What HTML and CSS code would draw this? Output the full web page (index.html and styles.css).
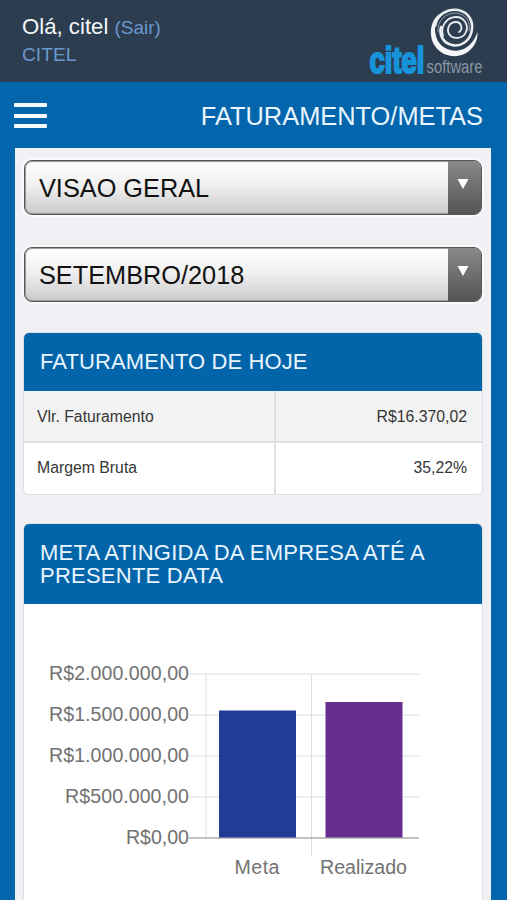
FILE: index.html
```html
<!DOCTYPE html>
<html lang="pt-BR">
<head>
<meta charset="utf-8">
<title>Faturamento/Metas</title>
<link rel="stylesheet" href="styles.css">
</head>
<body>
<header class="topbar">
  <div class="user">
    <div class="greeting">Olá, citel <a class="logout">(Sair)</a></div>
    <div class="company">CITEL</div>
  </div>
  <svg class="logo" width="120" height="77" viewBox="0 0 120 77">
    <text class="logo-main" x="1.500" y="68" textLength="55" lengthAdjust="spacingAndGlyphs">citel</text>
    <text class="logo-sub" x="58.500" y="68" textLength="56" lengthAdjust="spacingAndGlyphs">software</text>
    <path fill="#f4f6f8" d="M73 8C62 14 60 31 67 41C75 53 92 54 101 46C107 41 110 34 109.500 27C106 37 100 44 90 45.500C78 47 69 39 67.500 29C66 20 68 13 73 8Z"/>
    <g fill="none" stroke="#e9edf0" stroke-linecap="round">
      <path stroke-width="2.600" d="M67 21C69 9 80 3.500 90 5C101 7 106 17 103.500 27C101 37 92 42 84 40C75 38 71 30 73 22"/>
      <path stroke-width="1" stroke="#8f9ca8" d="M70 27C69 15 78 8 88 8C98 9 103 17 101 26"/>
      <path stroke-width="1.800" d="M75 31C72 21 79 12 88 12C96 12 101 20 98 27C95 34 85 35 81 29C78 23 82 17 88 17C94 17 95 25 91 27"/>
    </g>
  </svg>
</header>
<nav class="titlebar">
  <div class="burger"><span></span><span></span><span></span></div>
  <h1>FATURAMENTO/METAS</h1>
</nav>
<main class="content">
  <div class="select"><span class="value">VISAO GERAL</span><span class="arrow"><svg width="12" height="10"><path d="M0.5 0H11.5L6 10Z" fill="#fff"/></svg></span></div>
  <div class="select"><span class="value">SETEMBRO/2018</span><span class="arrow"><svg width="12" height="10"><path d="M0.5 0H11.5L6 10Z" fill="#fff"/></svg></span></div>
  <section class="card today">
    <h2>FATURAMENTO DE HOJE</h2>
    <div class="row shaded"><span>Vlr. Faturamento</span><span class="amount">R$16.370,02</span></div>
    <div class="row"><span>Margem Bruta</span><span class="amount">35,22%</span></div>
  </section>
  <section class="card goal">
    <h2>META ATINGIDA DA EMPRESA ATÉ A<br>PRESENTE DATA</h2>
    <svg class="chart" width="458" height="296" viewBox="0 0 458 296">
      <g class="grid">
        <path d="M165 70H395M165 111H395M165 152H395M165 193H395"/>
        <path d="M182 70V234M287.5 70V252"/>
        <path class="axis" d="M165 234H395"/>
      </g>
      <rect x="195" y="106.500" width="77" height="127" fill="#223b94"/>
      <rect x="301.500" y="98" width="77" height="135.500" fill="#672e91"/>
      <g class="labels">
        <text x="25" y="76" textLength="140">R$2.000.000,00</text>
        <text x="25" y="117" textLength="140">R$1.500.000,00</text>
        <text x="25" y="158" textLength="140">R$1.000.000,00</text>
        <text x="41" y="199" textLength="124">R$500.000,00</text>
        <text x="102" y="240" textLength="63">R$0,00</text>
        <text x="210.500" y="270" textLength="45">Meta</text>
        <text x="296" y="270" textLength="87">Realizado</text>
      </g>
    </svg>
  </section>
</main>
</body>
</html>
```

FILE: styles.css
```css
* { box-sizing: border-box; }
html { height: 900px; overflow: hidden; }
body {
  margin: 0;
  height: 900px;
  overflow: hidden;
  background: #0365ab;
  font-family: "Liberation Sans", Arial, sans-serif;
}
.topbar {
  height: 82px;
  padding: 5px 19px 0 22px;
  display: flex;
  justify-content: space-between;
  background: #2c3d50;
}
.user { padding-top: 9px; }
.greeting { font-size: 22.2px; line-height: 26px; color: #f3f7fa; }
.logout { font-size: 19px; color: #6b98cc; }
.company { font-size: 19.2px; line-height: 27px; color: #6b98cc; font-kerning: none; }
.logo-main { font-size: 36px; font-weight: bold; fill: #1793da; stroke: #1793da; stroke-width: 2.2px; }
.logo-sub { font-size: 18px; fill: #8996a3; }
.titlebar {
  height: 66px;
  padding: 0 24px 0 14px;
  display: flex;
  align-items: center;
  justify-content: space-between;
}
.burger { display: grid; gap: 6.5px; padding-top: 1px; }
.burger span { width: 33px; height: 4px; border-radius: 1px; background: #f5faff; }
h1, h2 { margin: 0; font-weight: normal; color: #e9f5ff; }
h1 { font-size: 25.4px; line-height: 30px; padding-top: 2px; }
.content {
  height: 752px;
  margin: 0 16px 0 15px;
  padding: 12px 9px 0;
  background: #f0f1f5;
  overflow: hidden;
}
.select {
  display: flex;
  height: 55px;
  margin-bottom: 32px;
  border: 1px solid #555;
  border-radius: 8px;
  background: linear-gradient(#fff, #f0f0f0 45%, #cbcbcb);
  box-shadow: 0 0 0 2px #fafafa, inset 0 0 1px 1px #9a9a9a;
  overflow: hidden;
}
.value { flex: 1; padding-left: 14px; font-size: 25.3px; line-height: 55px; color: #111; }
.arrow {
  width: 33px;
  padding: 18px 0 0 9px;
  display: flex;
  align-items: flex-start;
  background: linear-gradient(#898989, #545454);
}
.card {
  background: #fff;
  border-radius: 5px;
  box-shadow: 0 0 0 1px #e0e1e4;
  overflow: hidden;
}
.today { height: 161px; margin: -1px 0 30px; }
.goal { height: 400px; }
h2 { padding: 17px 16px; background: #0365a9; font-size: 22px; line-height: 23px; letter-spacing: 0.1px; }
.today h2 { height: 58px; }
.goal h2 { height: 80px; letter-spacing: 0.24px; }
.row {
  height: 51px;
  display: grid;
  grid-template-columns: 250px 1fr;
  font-size: 15.8px;
  line-height: 50px;
  color: #363636;
}
.row span { padding-left: 13px; }
.shaded { height: 52px; line-height: 51px; background: #f2f2f2; border-bottom: 2px solid #e1e1e1; }
.row .amount { padding-right: 15px; border-left: 2px solid #e0e0e0; text-align: right; }
.chart { display: block; }
.grid path { fill: none; stroke: #dedede; stroke-width: 1; }
.grid .axis { stroke: #adadad; stroke-width: 1.3; }
.labels { font-size: 19.6px; fill: #727272; }
```
